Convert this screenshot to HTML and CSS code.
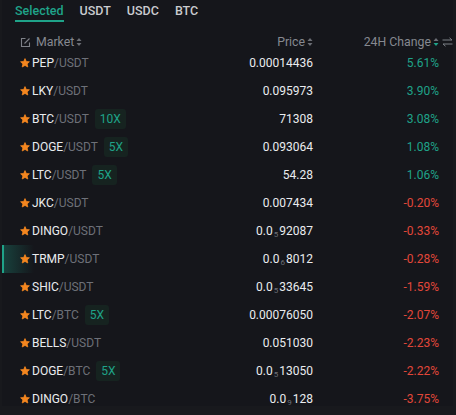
FILE: index.html
```html
<!DOCTYPE html>
<html>
<head>
<meta charset="utf-8">
<link rel="stylesheet" href="styles.css">
</head>
<body>
<div class="panel">
  <div class="tabs">
    <div class="tab active">Selected</div>
    <div class="tab">USDT</div>
    <div class="tab">USDC</div>
    <div class="tab">BTC</div>
  </div>
  <div class="head">
    <div class="hcell market">
      <svg class="edit" width="11" height="11" viewBox="0 0 11 11"><path d="M5.5 1.5H1.5v8h8V5.5" fill="none" stroke="#7d8087" stroke-width="1.1"/><path d="M4.5 6.5l5-5" stroke="#7d8087" stroke-width="1.1"/></svg>
      <span>Market</span>
      <svg class="sort" width="6" height="10" viewBox="0 0 6 10"><path d="M3 1l2.5 3h-5z" fill="#6c6f76"/><path d="M3 9l2.5-3h-5z" fill="#6c6f76"/></svg>
    </div>
    <div class="hcell right">
      <span>Price</span>
      <svg class="sort" width="6" height="10" viewBox="0 0 6 10"><path d="M3 1l2.5 3h-5z" fill="#6c6f76"/><path d="M3 9l2.5-3h-5z" fill="#6c6f76"/></svg>
    </div>
    <div class="hcell right change">
      <span>24H Change</span>
      <svg class="sort" width="6" height="10" viewBox="0 0 6 10"><path d="M3 1l2.5 3h-5z" fill="#6c6f76"/><path d="M3 9l2.5-3h-5z" fill="#1fa389"/></svg>
      <svg class="swap" width="11" height="10" viewBox="0 0 11 10"><path d="M0.5 3h9.5M7.5 0.8l2.5 2.2" fill="none" stroke="#7d8087" stroke-width="1"/><path d="M10.5 7H1M3.5 9.2L1 7" fill="none" stroke="#7d8087" stroke-width="1"/></svg>
    </div>
  </div>
  <div class="rows">
    <div class="row"><div class="sym"><svg class="star" viewBox="0 0 10 10"><path d="M5 0.6l1.3 2.9 3.1.3-2.3 2.1.7 3.1L5 7.4 2.2 9l.7-3.1L.6 3.8l3.1-.3z" fill="#f4861f" stroke="#f4861f" stroke-width=".8" stroke-linejoin="round"/></svg><b>PEP</b><i>/USDT</i></div><div class="price">0.00014436</div><div class="chg up">5.61%</div></div>
    <div class="row"><div class="sym"><svg class="star" viewBox="0 0 10 10"><path d="M5 0.6l1.3 2.9 3.1.3-2.3 2.1.7 3.1L5 7.4 2.2 9l.7-3.1L.6 3.8l3.1-.3z" fill="#f4861f" stroke="#f4861f" stroke-width=".8" stroke-linejoin="round"/></svg><b>LKY</b><i>/USDT</i></div><div class="price">0.095973</div><div class="chg up">3.90%</div></div>
    <div class="row"><div class="sym"><svg class="star" viewBox="0 0 10 10"><path d="M5 0.6l1.3 2.9 3.1.3-2.3 2.1.7 3.1L5 7.4 2.2 9l.7-3.1L.6 3.8l3.1-.3z" fill="#f4861f" stroke="#f4861f" stroke-width=".8" stroke-linejoin="round"/></svg><b>BTC</b><i>/USDT</i><span class="badge">10X</span></div><div class="price">71308</div><div class="chg up">3.08%</div></div>
    <div class="row"><div class="sym"><svg class="star" viewBox="0 0 10 10"><path d="M5 0.6l1.3 2.9 3.1.3-2.3 2.1.7 3.1L5 7.4 2.2 9l.7-3.1L.6 3.8l3.1-.3z" fill="#f4861f" stroke="#f4861f" stroke-width=".8" stroke-linejoin="round"/></svg><b>DOGE</b><i>/USDT</i><span class="badge">5X</span></div><div class="price">0.093064</div><div class="chg up">1.08%</div></div>
    <div class="row"><div class="sym"><svg class="star" viewBox="0 0 10 10"><path d="M5 0.6l1.3 2.9 3.1.3-2.3 2.1.7 3.1L5 7.4 2.2 9l.7-3.1L.6 3.8l3.1-.3z" fill="#f4861f" stroke="#f4861f" stroke-width=".8" stroke-linejoin="round"/></svg><b>LTC</b><i>/USDT</i><span class="badge">5X</span></div><div class="price">54.28</div><div class="chg up">1.06%</div></div>
    <div class="row"><div class="sym"><svg class="star" viewBox="0 0 10 10"><path d="M5 0.6l1.3 2.9 3.1.3-2.3 2.1.7 3.1L5 7.4 2.2 9l.7-3.1L.6 3.8l3.1-.3z" fill="#f4861f" stroke="#f4861f" stroke-width=".8" stroke-linejoin="round"/></svg><b>JKC</b><i>/USDT</i></div><div class="price">0.007434</div><div class="chg down">-0.20%</div></div>
    <div class="row"><div class="sym"><svg class="star" viewBox="0 0 10 10"><path d="M5 0.6l1.3 2.9 3.1.3-2.3 2.1.7 3.1L5 7.4 2.2 9l.7-3.1L.6 3.8l3.1-.3z" fill="#f4861f" stroke="#f4861f" stroke-width=".8" stroke-linejoin="round"/></svg><b>DINGO</b><i>/USDT</i></div><div class="price">0.0<sub>5</sub>92087</div><div class="chg down">-0.33%</div></div>
    <div class="row current"><div class="sym"><svg class="star" viewBox="0 0 10 10"><path d="M5 0.6l1.3 2.9 3.1.3-2.3 2.1.7 3.1L5 7.4 2.2 9l.7-3.1L.6 3.8l3.1-.3z" fill="#f4861f" stroke="#f4861f" stroke-width=".8" stroke-linejoin="round"/></svg><b>TRMP</b><i>/USDT</i></div><div class="price">0.0<sub>6</sub>8012</div><div class="chg down">-0.28%</div></div>
    <div class="row"><div class="sym"><svg class="star" viewBox="0 0 10 10"><path d="M5 0.6l1.3 2.9 3.1.3-2.3 2.1.7 3.1L5 7.4 2.2 9l.7-3.1L.6 3.8l3.1-.3z" fill="#f4861f" stroke="#f4861f" stroke-width=".8" stroke-linejoin="round"/></svg><b>SHIC</b><i>/USDT</i></div><div class="price">0.0<sub>5</sub>33645</div><div class="chg down">-1.59%</div></div>
    <div class="row"><div class="sym"><svg class="star" viewBox="0 0 10 10"><path d="M5 0.6l1.3 2.9 3.1.3-2.3 2.1.7 3.1L5 7.4 2.2 9l.7-3.1L.6 3.8l3.1-.3z" fill="#f4861f" stroke="#f4861f" stroke-width=".8" stroke-linejoin="round"/></svg><b>LTC</b><i>/BTC</i><span class="badge">5X</span></div><div class="price">0.00076050</div><div class="chg down">-2.07%</div></div>
    <div class="row"><div class="sym"><svg class="star" viewBox="0 0 10 10"><path d="M5 0.6l1.3 2.9 3.1.3-2.3 2.1.7 3.1L5 7.4 2.2 9l.7-3.1L.6 3.8l3.1-.3z" fill="#f4861f" stroke="#f4861f" stroke-width=".8" stroke-linejoin="round"/></svg><b>BELLS</b><i>/USDT</i></div><div class="price">0.051030</div><div class="chg down">-2.23%</div></div>
    <div class="row"><div class="sym"><svg class="star" viewBox="0 0 10 10"><path d="M5 0.6l1.3 2.9 3.1.3-2.3 2.1.7 3.1L5 7.4 2.2 9l.7-3.1L.6 3.8l3.1-.3z" fill="#f4861f" stroke="#f4861f" stroke-width=".8" stroke-linejoin="round"/></svg><b>DOGE</b><i>/BTC</i><span class="badge">5X</span></div><div class="price">0.0<sub>5</sub>13050</div><div class="chg down">-2.22%</div></div>
    <div class="row"><div class="sym"><svg class="star" viewBox="0 0 10 10"><path d="M5 0.6l1.3 2.9 3.1.3-2.3 2.1.7 3.1L5 7.4 2.2 9l.7-3.1L.6 3.8l3.1-.3z" fill="#f4861f" stroke="#f4861f" stroke-width=".8" stroke-linejoin="round"/></svg><b>DINGO</b><i>/BTC</i></div><div class="price">0.0<sub>9</sub>128</div><div class="chg down">-3.75%</div></div>
  </div>
</div>
</body>
</html>
```
FILE: styles.css
```css
* { box-sizing: border-box; }
html, body {
  margin: 0;
  padding: 0;
  background: #18191d;
  width: 456px;
  height: 415px;
  overflow: hidden;
}
body {
  font-family: Roboto, "Liberation Sans", sans-serif;
  font-size: 12px;
  color: #eaecef;
}
.panel {
  margin-left: 2px;
  width: 451px;
  height: 406px;
  background: #15161b;
  overflow: hidden;
}
.tabs {
  display: flex;
  gap: 16px;
  padding-left: 13px;
  height: 22px;
}
.tab {
  font-size: 12.5px;
  font-weight: 500;
  color: #c9cbcf;
  line-height: 20px;
  padding-top: 1px;
}
.tab.active {
  color: #1fa389;
  border-bottom: 2px solid #1fa389;
}
.head {
  display: grid;
  grid-template-columns: 1fr 120px 126px;
  padding-left: 18px;
  padding-right: 14px;
  margin-top: 13px;
  height: 14px;
  color: #868990;
  line-height: 14px;
  font-size: 12.3px;
}
.hcell {
  display: flex;
  align-items: center;
  gap: 1px;
}
.hcell.right { justify-content: flex-end; }
.edit { margin-right: 4px; }
.sort { margin-left: 1px; }
.change { position: relative; }
.swap {
  position: absolute;
  right: -14px;
  top: 2px;
}
.rows { display: flex; flex-direction: column; }
.row {
  display: grid;
  grid-template-columns: 1fr 120px 126px;
  align-items: center;
  height: 28px;
  padding-left: 18px;
  padding-right: 14px;
}
.row.current {
  background: linear-gradient(90deg, rgba(31,163,137,0.3) 0, rgba(31,163,137,0.0) 30px);
  border-left: 2px solid #1fa389;
  padding-left: 16px;
}
.sym {
  display: flex;
  align-items: center;
  white-space: nowrap;
}
.star {
  width: 10px;
  height: 10px;
  margin-right: 2px;
}
.sym b { font-weight: 400; color: #eaecef; }
.sym i { font-style: normal; color: #6d7078; }
.badge {
  margin-left: 6px;
  height: 20px;
  line-height: 20px;
  padding: 0 5px;
  border-radius: 3px;
  background: #162320;
  color: #1fa389;
}
.price { text-align: right; }
.price sub {
  font-size: 8px;
  color: #6d7078;
  vertical-align: -2px;
  margin: 0 1px;
}
.chg { text-align: right; }
.up { color: #1fa389; }
.down { color: #e2473a; }
```
